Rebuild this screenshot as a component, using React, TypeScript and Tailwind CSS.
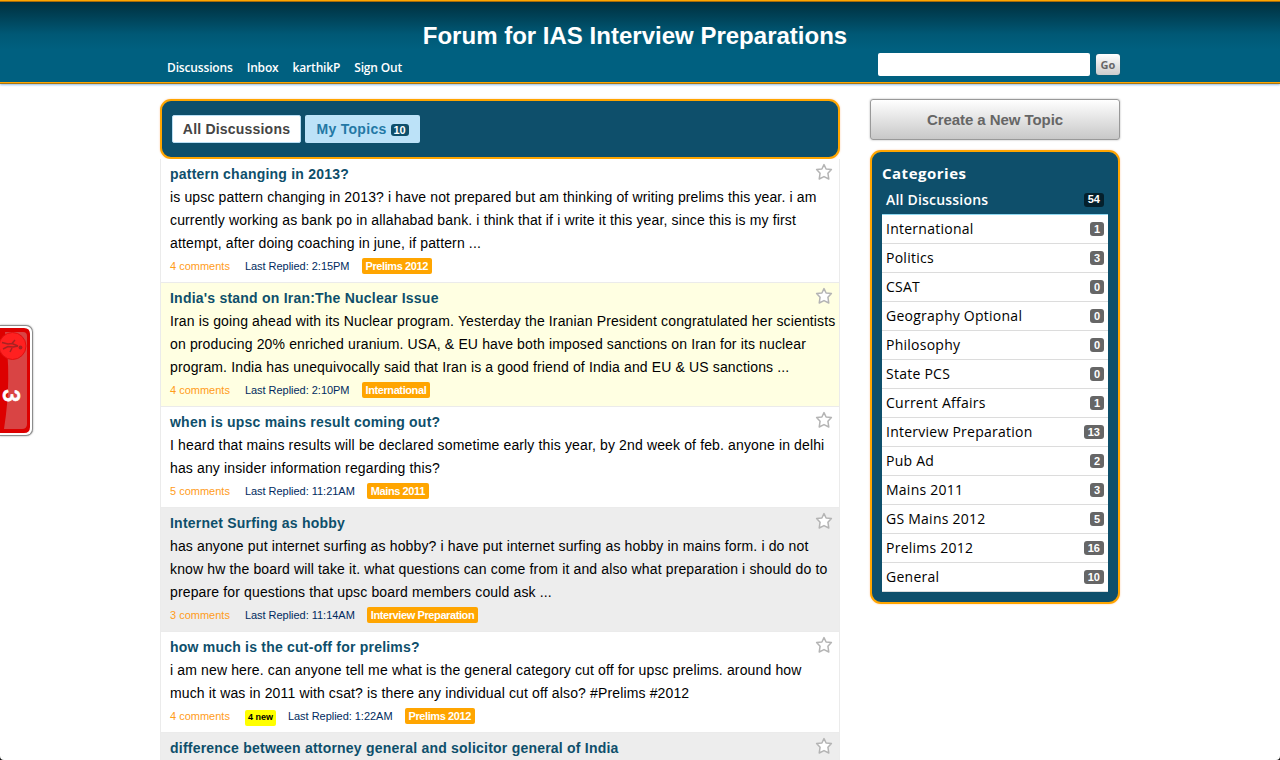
import React from "react";

type Topic = {
  title: string;
  lines: string[];
  comments?: string;
  fresh?: string;
  time?: string;
  tag?: string;
  bg: string;
};

const topics: Topic[] = [
  {
    title: "pattern changing in 2013?",
    lines: [
      "is upsc pattern changing in 2013? i have not prepared but am thinking of writing prelims this year. i am",
      "currently working as bank po in allahabad bank. i think that if i write it this year, since this is my first",
      "attempt, after doing coaching in june, if pattern ...",
    ],
    comments: "4 comments",
    time: "2:15PM",
    tag: "Prelims 2012",
    bg: "bg-white",
  },
  {
    title: "India's stand on Iran:The Nuclear Issue",
    lines: [
      "Iran is going ahead with its Nuclear program. Yesterday the Iranian President congratulated her scientists",
      "on producing 20% enriched uranium. USA, & EU have both imposed sanctions on Iran for its nuclear",
      "program. India has unequivocally said that Iran is a good friend of India and EU & US sanctions ...",
    ],
    comments: "4 comments",
    time: "2:10PM",
    tag: "International",
    bg: "bg-[#ffffe2]",
  },
  {
    title: "when is upsc mains result coming out?",
    lines: [
      "I heard that mains results will be declared sometime early this year, by 2nd week of feb. anyone in delhi",
      "has any insider information regarding this?",
    ],
    comments: "5 comments",
    time: "11:21AM",
    tag: "Mains 2011",
    bg: "bg-white",
  },
  {
    title: "Internet Surfing as hobby",
    lines: [
      "has anyone put internet surfing as hobby? i have put internet surfing as hobby in mains form. i do not",
      "know hw the board will take it. what questions can come from it and also what preparation i should do to",
      "prepare for questions that upsc board members could ask ...",
    ],
    comments: "3 comments",
    time: "11:14AM",
    tag: "Interview Preparation",
    bg: "bg-[#ededed]",
  },
  {
    title: "how much is the cut-off for prelims?",
    lines: [
      "i am new here. can anyone tell me what is the general category cut off for upsc prelims. around how",
      "much it was in 2011 with csat? is there any individual cut off also? #Prelims #2012",
    ],
    comments: "4 comments",
    fresh: "4 new",
    time: "1:22AM",
    tag: "Prelims 2012",
    bg: "bg-white",
  },
  {
    title: "difference between attorney general and solicitor general of India",
    lines: [],
    bg: "bg-[#ededed]",
  },
];

const categories: [string, number][] = [
  ["International", 1],
  ["Politics", 3],
  ["CSAT", 0],
  ["Geography Optional", 0],
  ["Philosophy", 0],
  ["State PCS", 0],
  ["Current Affairs", 1],
  ["Interview Preparation", 13],
  ["Pub Ad", 2],
  ["Mains 2011", 3],
  ["GS Mains 2012", 5],
  ["Prelims 2012", 16],
  ["General", 10],
];

function Star() {
  return (
    <svg width="18" height="18" viewBox="0 0 18 18" className="shrink-0">
      <path
        d="M9 1.6 L11.1 6 L16.4 6.6 L12.9 10.2 L13.8 16 L9 13.6 L4.2 16 L5.1 10.2 L1.6 6.6 L6.9 6 Z"
        fill="#fff"
        stroke="#b4b4b4"
        strokeWidth="1.5"
        strokeLinejoin="round"
      />
    </svg>
  );
}

function Row({ t }: { t: Topic }) {
  return (
    <article className={`border-x border-b border-[#ebebeb] pt-1 pb-1 pl-[9px] whitespace-nowrap ${t.bg}`}>
      <div className="flex h-[23px] items-center justify-between pr-[6px]">
        <h2 className="text-[14px] leading-[23px] font-bold tracking-[0.22px] text-[#0e4f6b]">{t.title}</h2>
        <div className="pb-[6px]">
          <Star />
        </div>
      </div>
      {t.lines.map((l) => (
        <p key={l} className="text-[14px] leading-[23px] tracking-[0.14px] text-black">
          {l}
        </p>
      ))}
      {t.comments && (
        <div className="flex h-[23px] items-center text-[11px]">
          <span className="mr-[15px] text-[#ff9c1a]">{t.comments}</span>
          {t.fresh && (
            <span className="mt-[2px] mr-3 flex h-4 items-center rounded-[2px] bg-[#ffff00] px-[3px] text-[9px] font-bold text-black">
              {t.fresh}
            </span>
          )}
          <span className="mr-3 tracking-[-0.03px] text-[#012b60]">Last Replied: {t.time}</span>
          <span className="mb-px flex h-4 items-center rounded-[2px] bg-[#ffa500] px-1 pt-px font-bold tracking-[-0.4px] text-white">
            {t.tag}
          </span>
        </div>
      )}
    </article>
  );
}

function Badge() {
  return (
    <div className="absolute top-[325px] left-0 h-[111px] w-[33px] rounded-r-[7px] border border-l-0 border-[#8c8c8c] bg-white py-[2px] pr-[2px] shadow-[0_0_2px_#999]">
      <svg width="30" height="105" viewBox="0 0 30 105" className="overflow-visible">
        <path d="M0 0H24Q30 0 30 6V99Q30 105 24 105H0Z" fill="#dd0000" />
        <path d="M5 4H23Q27 4 27 8V96Q27 101 22 101H4Q12 50 5 4Z" fill="#d94444" />
        <circle cx="12.5" cy="18" r="13.5" fill="#ff2020" stroke="#e01010" />
        <path
          d="M2 14.5L8 16L12 15.5L18 18M3 21L8 18.5L13 19L18 18M12 15.5L15 12M12 20L10 24"
          fill="none"
          stroke="#a82222"
          strokeWidth="1.5"
        />
        <circle cx="20.5" cy="19.5" r="1.9" fill="#a82222" />
        <text
          x="0"
          y="0"
          transform="translate(3 61) rotate(90)"
          fill="#fff"
          stroke="#fff"
          strokeWidth="0.6"
          fontSize="23"
          fontWeight="bold"
          fontFamily="Lato, sans-serif"
        >
          3
        </text>
      </svg>
    </div>
  );
}

export default function App() {
  return (
    <div className="relative h-[760px] w-[1280px] overflow-hidden bg-white font-['Liberation_Sans',Arial,sans-serif]">
      <header className="h-[84px] border-t border-b border-t-[#ffa500] border-b-[#a87512] shadow-[0_1px_2px_#8fbbe8]">
        <div className="h-[82px] border-t border-b border-t-[#a86b0b] border-b-[#ffa500] bg-linear-to-b from-[#00303f] via-[#005875] via-40% to-[#006080] to-60%">
          <div className="mx-auto w-[960px] pt-[19px]">
            <h1 className="pr-[10px] text-center text-[24px] leading-[29px] font-bold tracking-[0.01px] text-white">
              Forum for IAS Interview Preparations
            </h1>
            <div className="flex justify-between">
              <nav className="flex gap-[14px] pt-[9px] pl-[7px] font-['Open_Sans',sans-serif] text-[12px] leading-[18px] font-semibold tracking-[-0.16px] text-white">
                <a>Discussions</a>
                <a>Inbox</a>
                <a>karthikP</a>
                <a>Sign Out</a>
              </nav>
              <form className="flex gap-[6px] pt-[3px]">
                <input className="h-[23px] w-[212px] rounded-[2px] bg-white" />
                <button
                  type="button"
                  className="mt-px h-[21px] w-6 rounded-[3px] bg-linear-to-b from-white to-[#cccccc] pt-px text-center font-['Open_Sans',sans-serif] text-[11px] font-bold text-[#666] shadow-[0_0_1px_#555]"
                >
                  Go
                </button>
              </form>
            </div>
          </div>
        </div>
      </header>

      <div className="mx-auto flex w-[960px] justify-between pt-[15px]">
        <main className="w-[680px]">
          <div className="flex h-[60px] gap-1 rounded-[11px] border-2 border-[#ffa500] bg-[#0e4f6b] pt-[14px] pl-[10px] text-[14px] font-bold shadow-[0_0_2px_#ffc9a0]">
            <a className="flex h-7 w-[129px] items-center justify-center rounded-[2px] border border-[#b9dff5] bg-white tracking-[0.2px] text-[#444]">
              All Discussions
            </a>
            <a className="flex h-7 w-[115px] items-center justify-center gap-1 rounded-[2px] bg-[#bce2f8] tracking-[0.3px] text-[#2378a5]">
              My Topics
              <span className="mt-[2px] flex h-3 w-[18px] items-center justify-center rounded-[3px] bg-[#0e4f6b] text-[11px] tracking-normal text-white">
                10
              </span>
            </a>
          </div>
          {topics.map((t) => (
            <Row key={t.title} t={t} />
          ))}
        </main>

        <aside className="w-[250px]">
          <button
            type="button"
            className="flex h-[41px] w-full items-center justify-center rounded-[3px] border border-[#999] bg-linear-to-b from-white to-[#c8c8c8] pt-px text-[15px] font-bold tracking-[-0.06px] text-[#666] shadow-[0_0_2px_#aaa]"
          >
            Create a New Topic
          </button>
          <section className="mt-[10px] h-[454px] rounded-[11px] border-2 border-[#ffa500] bg-[#0e4f6b] px-[10px] pt-[9px] font-['Open_Sans',sans-serif] shadow-[0_0_2px_#ffc9a0]">
            <h3 className="text-[15px] leading-[24px] font-bold tracking-[0.5px] text-white">Categories</h3>
            <div className="flex h-[30px] items-center justify-between border-b border-[#8fd8f0] px-1 text-[14px] font-semibold tracking-[0.2px] text-white">
              <span>All Discussions</span>
              <span className="flex h-[14px] items-center rounded-[3px] bg-[#04202c] px-1 font-['Liberation_Sans',sans-serif] text-[11px] font-bold tracking-normal">
                54
              </span>
            </div>
            <ul>
              {categories.map(([name, n]) => (
                <li
                  key={name}
                  className="flex h-[29px] items-center justify-between border-b border-[#dcdcdc] bg-white px-1 text-[14px] tracking-[0.25px] text-black"
                >
                  <span className="pb-[2px]">{name}</span>
                  <span className="flex h-[14px] items-center rounded-[3px] bg-[#666] px-1 font-['Liberation_Sans',sans-serif] text-[11px] font-bold tracking-normal text-white">
                    {n}
                  </span>
                </li>
              ))}
            </ul>
          </section>
        </aside>
      </div>

      <Badge />
      <svg className="absolute bottom-0 left-0" width="4" height="4" viewBox="0 0 5 5">
        <path d="M0 0Q0 5 5 5H0Z" fill="#111" />
      </svg>
      <svg className="absolute right-0 bottom-0" width="4" height="4" viewBox="0 0 5 5">
        <path d="M5 0Q5 5 0 5H5Z" fill="#111" />
      </svg>
    </div>
  );
}
